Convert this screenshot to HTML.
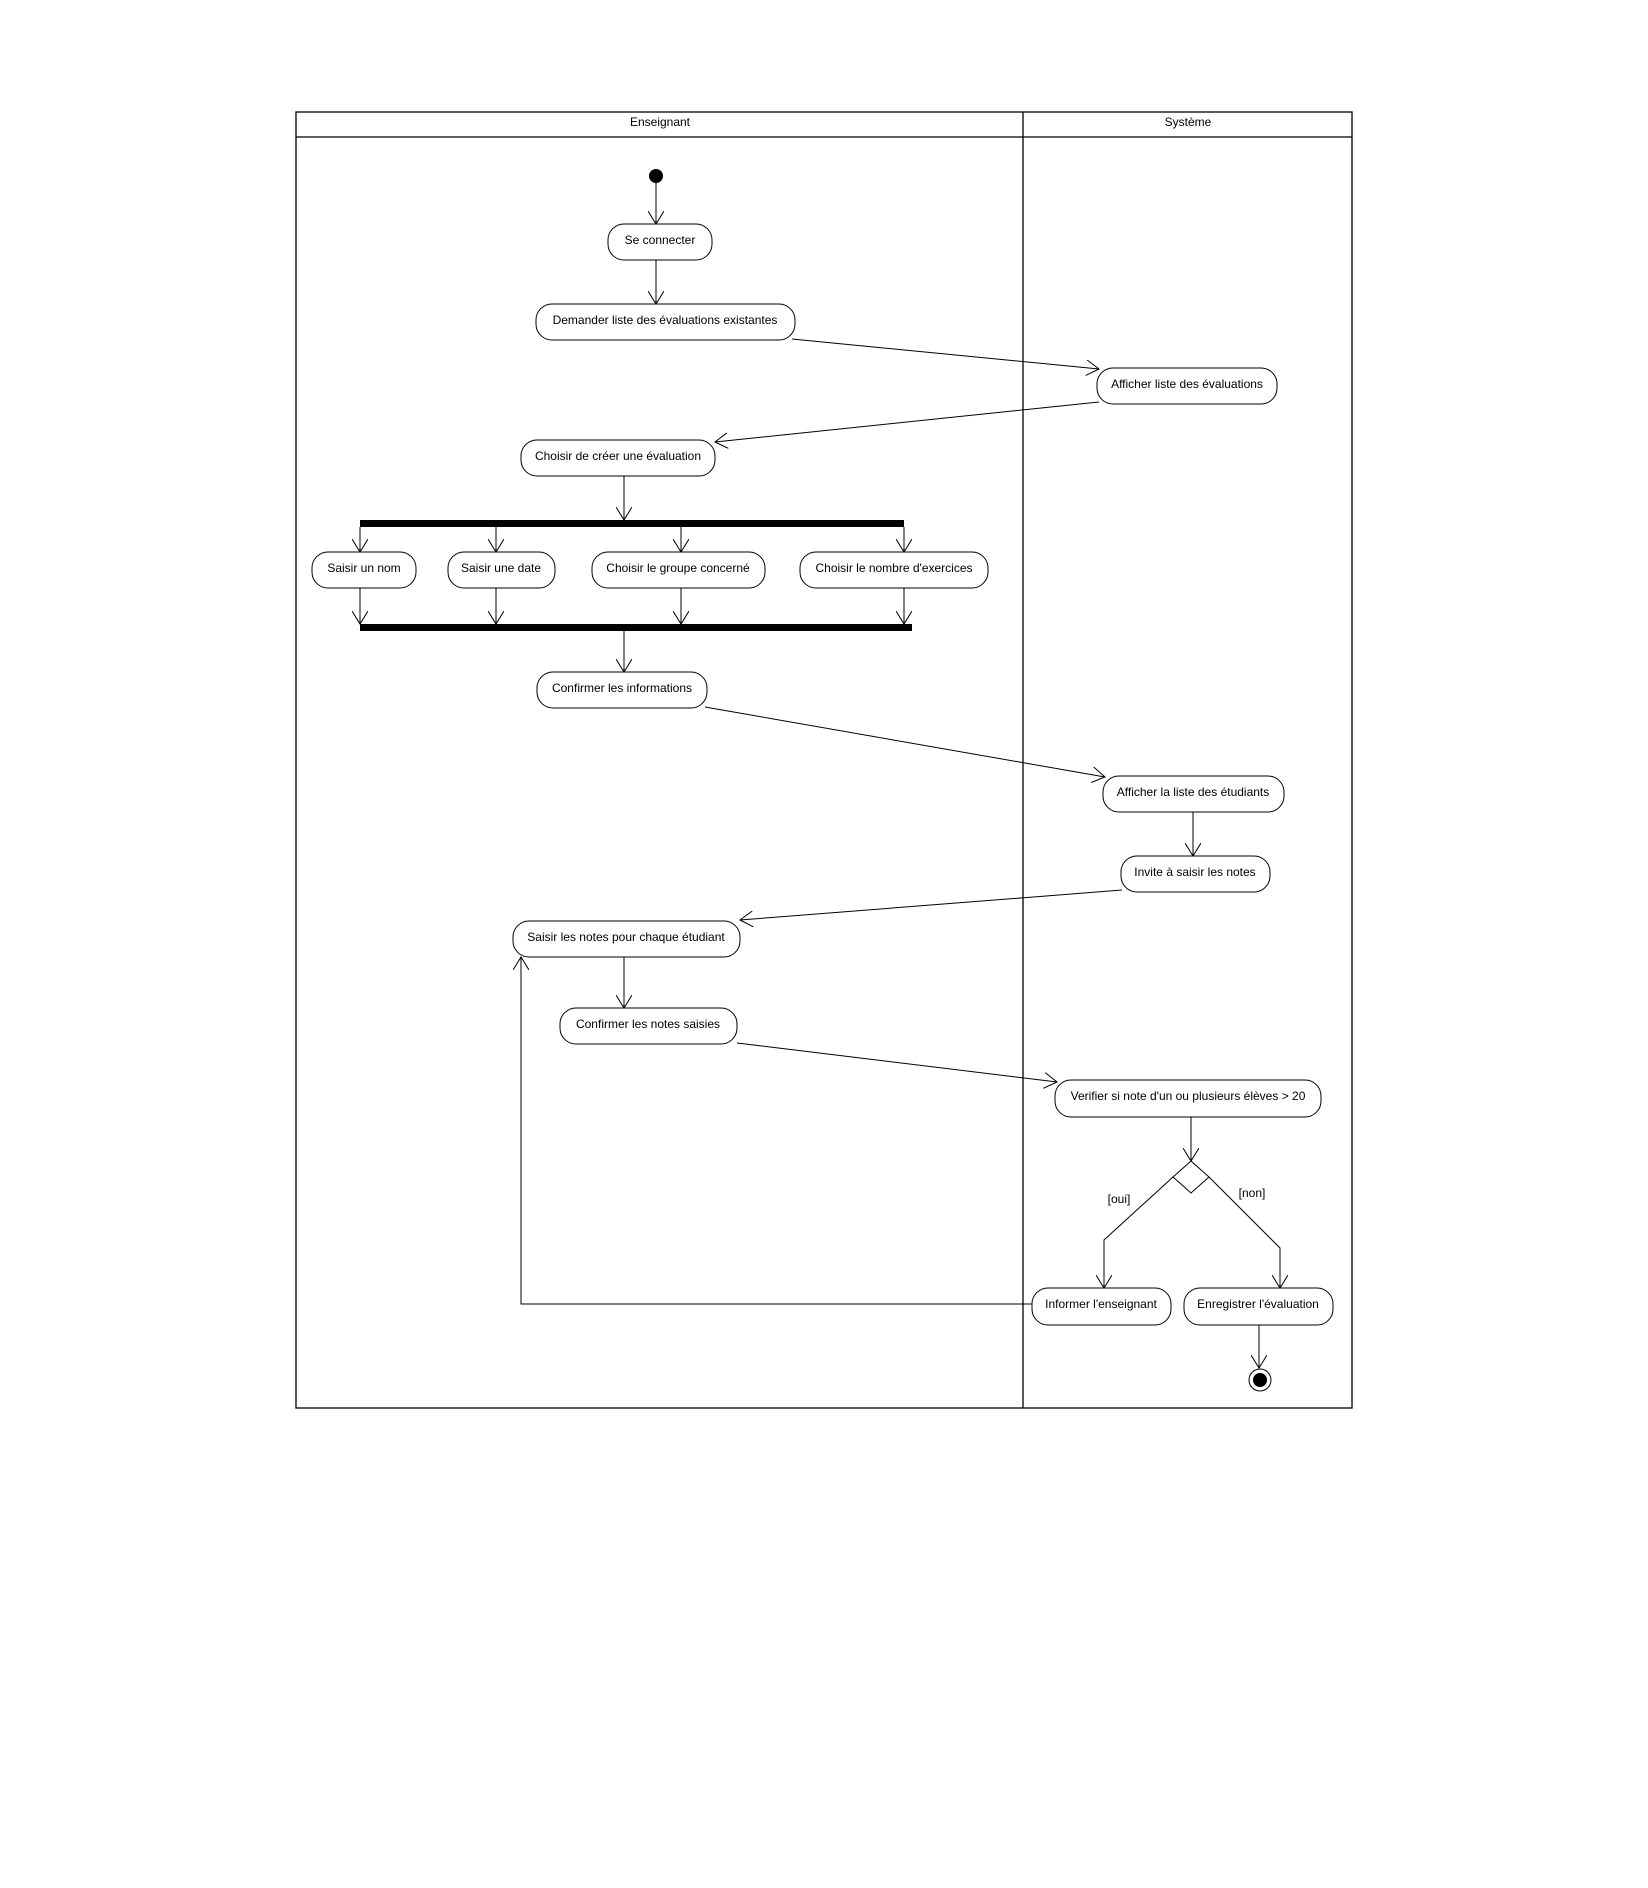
<!DOCTYPE html>
<html><head><meta charset="utf-8"><style>body{margin:0;background:#fff}svg{display:block}text{font-family:"Liberation Sans",sans-serif;font-size:12px;fill:#000}</style></head><body>
<svg width="1648" height="1888" viewBox="0 0 1648 1888" xmlns="http://www.w3.org/2000/svg">
<defs><marker id="a" markerWidth="14" markerHeight="16" refX="13" refY="8" orient="auto" markerUnits="userSpaceOnUse"><path d="M0,0 L13,8 L0,16" fill="none" stroke="#000" stroke-width="1"/></marker></defs>
<g stroke="#000" stroke-width="1.3" fill="none">
<rect x="296" y="112" width="1056" height="1296"/>
<line x1="296" y1="137" x2="1352" y2="137"/>
<line x1="1023" y1="112" x2="1023" y2="1408"/>
</g>
<text x="660" y="126" text-anchor="middle">Enseignant</text>
<text x="1188" y="126" text-anchor="middle">Système</text>
<circle cx="656" cy="176" r="7" fill="#000"/>
<g stroke="#000" stroke-width="1" fill="none" marker-end="url(#a)">
<line x1="656" y1="183" x2="656" y2="224"/>
<line x1="656" y1="260" x2="656" y2="304"/>
<line x1="792" y1="339" x2="1099" y2="369"/>
<line x1="1099" y1="402" x2="715" y2="442"/>
<line x1="624" y1="476" x2="624" y2="520"/>
<line x1="360" y1="527" x2="360" y2="552"/>
<line x1="496" y1="527" x2="496" y2="552"/>
<line x1="681" y1="527" x2="681" y2="552"/>
<line x1="904" y1="527" x2="904" y2="552"/>
<line x1="360" y1="588" x2="360" y2="624"/>
<line x1="496" y1="588" x2="496" y2="624"/>
<line x1="681" y1="588" x2="681" y2="624"/>
<line x1="904" y1="588" x2="904" y2="624"/>
<line x1="624" y1="631" x2="624" y2="672"/>
<line x1="705" y1="707" x2="1105" y2="777"/>
<line x1="1193" y1="812" x2="1193" y2="856"/>
<line x1="1122" y1="890" x2="740" y2="920"/>
<line x1="624" y1="957" x2="624" y2="1008"/>
<line x1="737" y1="1043" x2="1057" y2="1082"/>
<line x1="1191" y1="1117" x2="1191" y2="1161"/>
<polyline points="1173,1177 1104,1240 1104,1288"/>
<polyline points="1209,1177 1280,1248 1280,1288"/>
<polyline points="1032,1304 521,1304 521,957"/>
<line x1="1259" y1="1325" x2="1259" y2="1368"/>
</g>
<polygon points="1191,1161 1209,1177 1191,1193 1173,1177" fill="#fff" stroke="#000"/>
<rect x="360" y="520" width="544" height="7" fill="#000"/>
<rect x="360" y="624" width="552" height="7" fill="#000"/>
<circle cx="1260" cy="1380" r="11" fill="#fff" stroke="#000"/>
<circle cx="1260" cy="1380" r="7" fill="#000"/>
<g stroke="#000" stroke-width="1" fill="#fff">
<rect x="608" y="224" width="104" height="36" rx="16"/>
<rect x="536" y="304" width="259" height="36" rx="16"/>
<rect x="1097" y="368" width="180" height="36" rx="16"/>
<rect x="521" y="440" width="194" height="36" rx="16"/>
<rect x="312" y="552" width="104" height="36" rx="16"/>
<rect x="448" y="552" width="107" height="36" rx="16"/>
<rect x="592" y="552" width="173" height="36" rx="16"/>
<rect x="800" y="552" width="188" height="36" rx="16"/>
<rect x="537" y="672" width="170" height="36" rx="16"/>
<rect x="1103" y="776" width="181" height="36" rx="16"/>
<rect x="1121" y="856" width="149" height="36" rx="16"/>
<rect x="513" y="921" width="227" height="36" rx="16"/>
<rect x="560" y="1008" width="177" height="36" rx="16"/>
<rect x="1055" y="1080" width="266" height="37" rx="16"/>
<rect x="1032" y="1288" width="139" height="37" rx="16"/>
<rect x="1184" y="1288" width="149" height="37" rx="16"/>
</g>
<g text-anchor="middle">
<text x="660" y="244">Se connecter</text>
<text x="665" y="324">Demander liste des évaluations existantes</text>
<text x="1187" y="388">Afficher liste des évaluations</text>
<text x="618" y="460">Choisir de créer une évaluation</text>
<text x="364" y="572">Saisir un nom</text>
<text x="501" y="572">Saisir une date</text>
<text x="678" y="572">Choisir le groupe concerné</text>
<text x="894" y="572">Choisir le nombre d'exercices</text>
<text x="622" y="692">Confirmer les informations</text>
<text x="1193" y="796">Afficher la liste des étudiants</text>
<text x="1195" y="876">Invite à saisir les notes</text>
<text x="626" y="941">Saisir les notes pour chaque étudiant</text>
<text x="648" y="1028">Confirmer les notes saisies</text>
<text x="1188" y="1100">Verifier si note d'un ou plusieurs élèves &gt; 20</text>
<text x="1101" y="1308">Informer l'enseignant</text>
<text x="1258" y="1308">Enregistrer l'évaluation</text>
<text x="1119" y="1203">[oui]</text>
<text x="1252" y="1197">[non]</text>
</g>
</svg>
</body></html>
